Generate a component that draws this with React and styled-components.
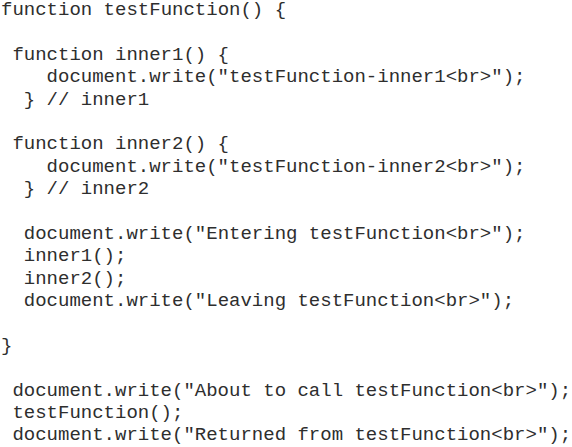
import React from "react";
import styled, { createGlobalStyle } from "styled-components";

const Global = createGlobalStyle`
  html, body { margin: 0; padding: 0; background: #ffffff; }
`;

const Listing = styled.pre`
  margin: -1px 0 0 0;
  padding: 0 0 0 1px;
  font-family: "Liberation Mono", "Courier New", monospace;
  font-size: 19px;
  line-height: 22.4px;
  color: #2e2e2e;
  white-space: pre;
`;

const Line = styled.div`
  height: 22.4px;
  padding-left: ${(p) => p.$indent * 11.4}px;
`;

const lines = [
  [0, "function testFunction() {"],
  [0, ""],
  [1, "function inner1() {"],
  [4, 'document.write("testFunction-inner1<br>");'],
  [2, "} // inner1"],
  [0, ""],
  [1, "function inner2() {"],
  [4, 'document.write("testFunction-inner2<br>");'],
  [2, "} // inner2"],
  [0, ""],
  [2, 'document.write("Entering testFunction<br>");'],
  [2, "inner1();"],
  [2, "inner2();"],
  [2, 'document.write("Leaving testFunction<br>");'],
  [0, ""],
  [0, "}"],
  [0, ""],
  [1, 'document.write("About to call testFunction<br>");'],
  [1, "testFunction();"],
  [1, 'document.write("Returned from testFunction<br>");'],
];

export default function App() {
  return (
    <>
      <Global />
      <Listing>
        {lines.map(([indent, text], i) => (
          <Line key={i} $indent={indent}>
            {text}
          </Line>
        ))}
      </Listing>
    </>
  );
}
